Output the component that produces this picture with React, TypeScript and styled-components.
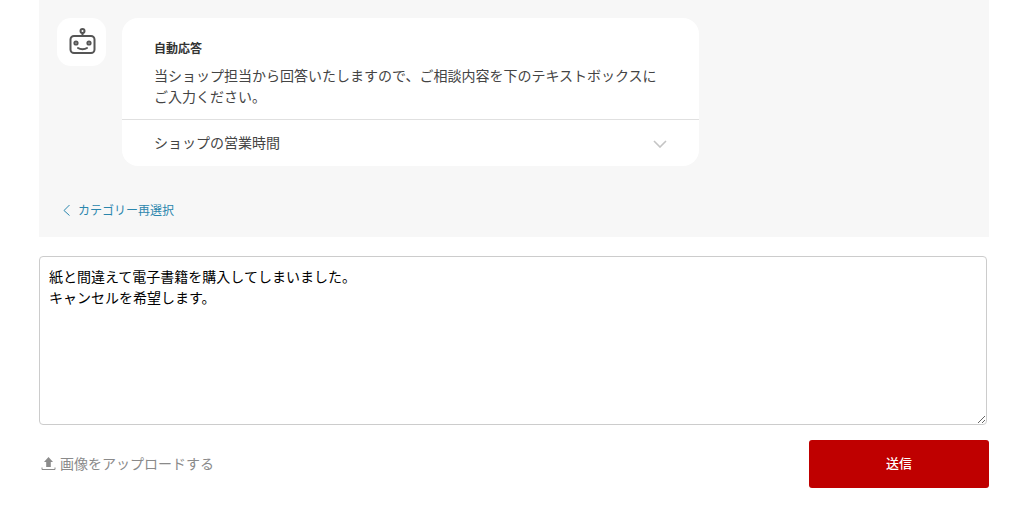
import React from "react";
import styled, { createGlobalStyle } from "styled-components";

const GlobalStyle = createGlobalStyle`
  html, body { margin: 0; padding: 0; background: #fff; }
  body { font-family: "Noto Sans CJK JP", "Noto Sans", sans-serif; color: #333; }
  * { box-sizing: border-box; }
`;

const Page = styled.main`
  width: 950px;
  margin-left: 39px;
`;

const ChatPanel = styled.section`
  background: #f7f7f7;
  height: 237px;
  padding: 18px 18px 0;
`;

const MessageRow = styled.div`
  display: flex;
  gap: 16px;
  align-items: flex-start;
`;

const Avatar = styled.div`
  width: 49px;
  height: 48px;
  border-radius: 14px;
  background: #fff;
  display: flex;
  align-items: center;
  justify-content: center;
  flex: none;
`;

const Bubble = styled.div`
  width: 577px;
  height: 148px;
  border-radius: 16px;
  background: #fff;
`;

const BubbleBody = styled.div`
  height: 102px;
  padding: 21px 32px 0;
  border-bottom: 1px solid #e0e0e0;
`;

const Title = styled.div`
  font-size: 12px;
  font-weight: 700;
  line-height: 18px;
  color: #333;
  margin-bottom: 8px;
`;

const Message = styled.p`
  margin: 0;
  font-size: 14px;
  line-height: 21px;
  color: #444;
`;

const Accordion = styled.div`
  height: 46px;
  padding: 0 32px 2px;
  display: flex;
  align-items: center;
  justify-content: space-between;
  font-size: 14px;
  color: #444;
`;

const ChevronSlot = styled.span`
  display: flex;
  margin-top: 3px;
`;

const BackLink = styled.a`
  display: flex;
  align-items: center;
  gap: 8px;
  margin: 35px 0 0 6px;
  font-size: 12px;
  line-height: 18px;
  color: #2a86ad;
`;

const InputBox = styled.textarea`
  display: block;
  width: 948px;
  height: 169px;
  margin-top: 19px;
  padding: 9px 9px;
  border: 1px solid #cccccc;
  border-radius: 4px;
  font-family: "Noto Sans CJK JP", sans-serif;
  font-size: 14px;
  line-height: 21px;
  color: #000;
  background: #fff;
  outline: none;
`;

const Footer = styled.div`
  display: flex;
  align-items: center;
  justify-content: space-between;
  margin-top: 15px;
`;

const Upload = styled.div`
  display: flex;
  align-items: center;
  gap: 4px;
  padding: 0 0 2px 2px;
  font-size: 14px;
  color: #8a8a8a;
`;

const SendButton = styled.button`
  width: 180px;
  height: 48px;
  padding: 0 0 4px;
  border: 0;
  border-radius: 3px;
  background: #bf0000;
  color: #fff;
  font-family: "Noto Sans CJK JP", sans-serif;
  font-size: 13px;
  font-weight: 500;
`;

const RobotIcon = () => (
  <svg width="28" height="28" viewBox="0 0 28 28" fill="none" stroke="#555" strokeWidth="2">
    <circle cx="14.500" cy="3" r="2" />
    <path d="M14.500 5v3" />
    <rect x="2.500" y="8" width="24" height="17" rx="3.500" />
    <circle cx="8" cy="15" r="1.600" />
    <circle cx="21" cy="15" r="1.600" />
    <path d="M10 20c2.400 1.600 6.600 1.600 9 0" strokeLinecap="round" />
  </svg>
);

const ChevronDown = () => (
  <svg width="14" height="8" viewBox="0 0 14 8" fill="none" stroke="#c4c4c4" strokeWidth="1.600">
    <path d="M1 1l6 6 6-6" />
  </svg>
);

const ChevronLeft = () => (
  <svg width="7" height="12" viewBox="0 0 7 12" fill="none" stroke="#2a86ad" strokeWidth="1">
    <path d="M6.500 1L1 6.500l5.500 5" />
  </svg>
);

const UploadIcon = () => (
  <svg width="15" height="15" viewBox="0 0 15 15">
    <path d="M7.500 1L12 6H9.800V11H5.200V6H3z" fill="#8c8c8c" />
    <path d="M1 11.500v2h13v-2" fill="none" stroke="#8c8c8c" strokeWidth="1" />
  </svg>
);

export default function App() {
  return (
    <Page>
      <GlobalStyle />
      <ChatPanel>
        <MessageRow>
          <Avatar>
            <RobotIcon />
          </Avatar>
          <Bubble>
            <BubbleBody>
              <Title>自動応答</Title>
              <Message>
                当ショップ担当から回答いたしますので、ご相談内容を下のテキストボックスに
                <br />
                ご入力ください。
              </Message>
            </BubbleBody>
            <Accordion>
              ショップの営業時間
              <ChevronSlot>
                <ChevronDown />
              </ChevronSlot>
            </Accordion>
          </Bubble>
        </MessageRow>
        <BackLink>
          <ChevronLeft />
          カテゴリー再選択
        </BackLink>
      </ChatPanel>
      <InputBox defaultValue={"紙と間違えて電子書籍を購入してしまいました。\nキャンセルを希望します。"} />
      <Footer>
        <Upload>
          <UploadIcon />
          画像をアップロードする
        </Upload>
        <SendButton>送信</SendButton>
      </Footer>
    </Page>
  );
}
